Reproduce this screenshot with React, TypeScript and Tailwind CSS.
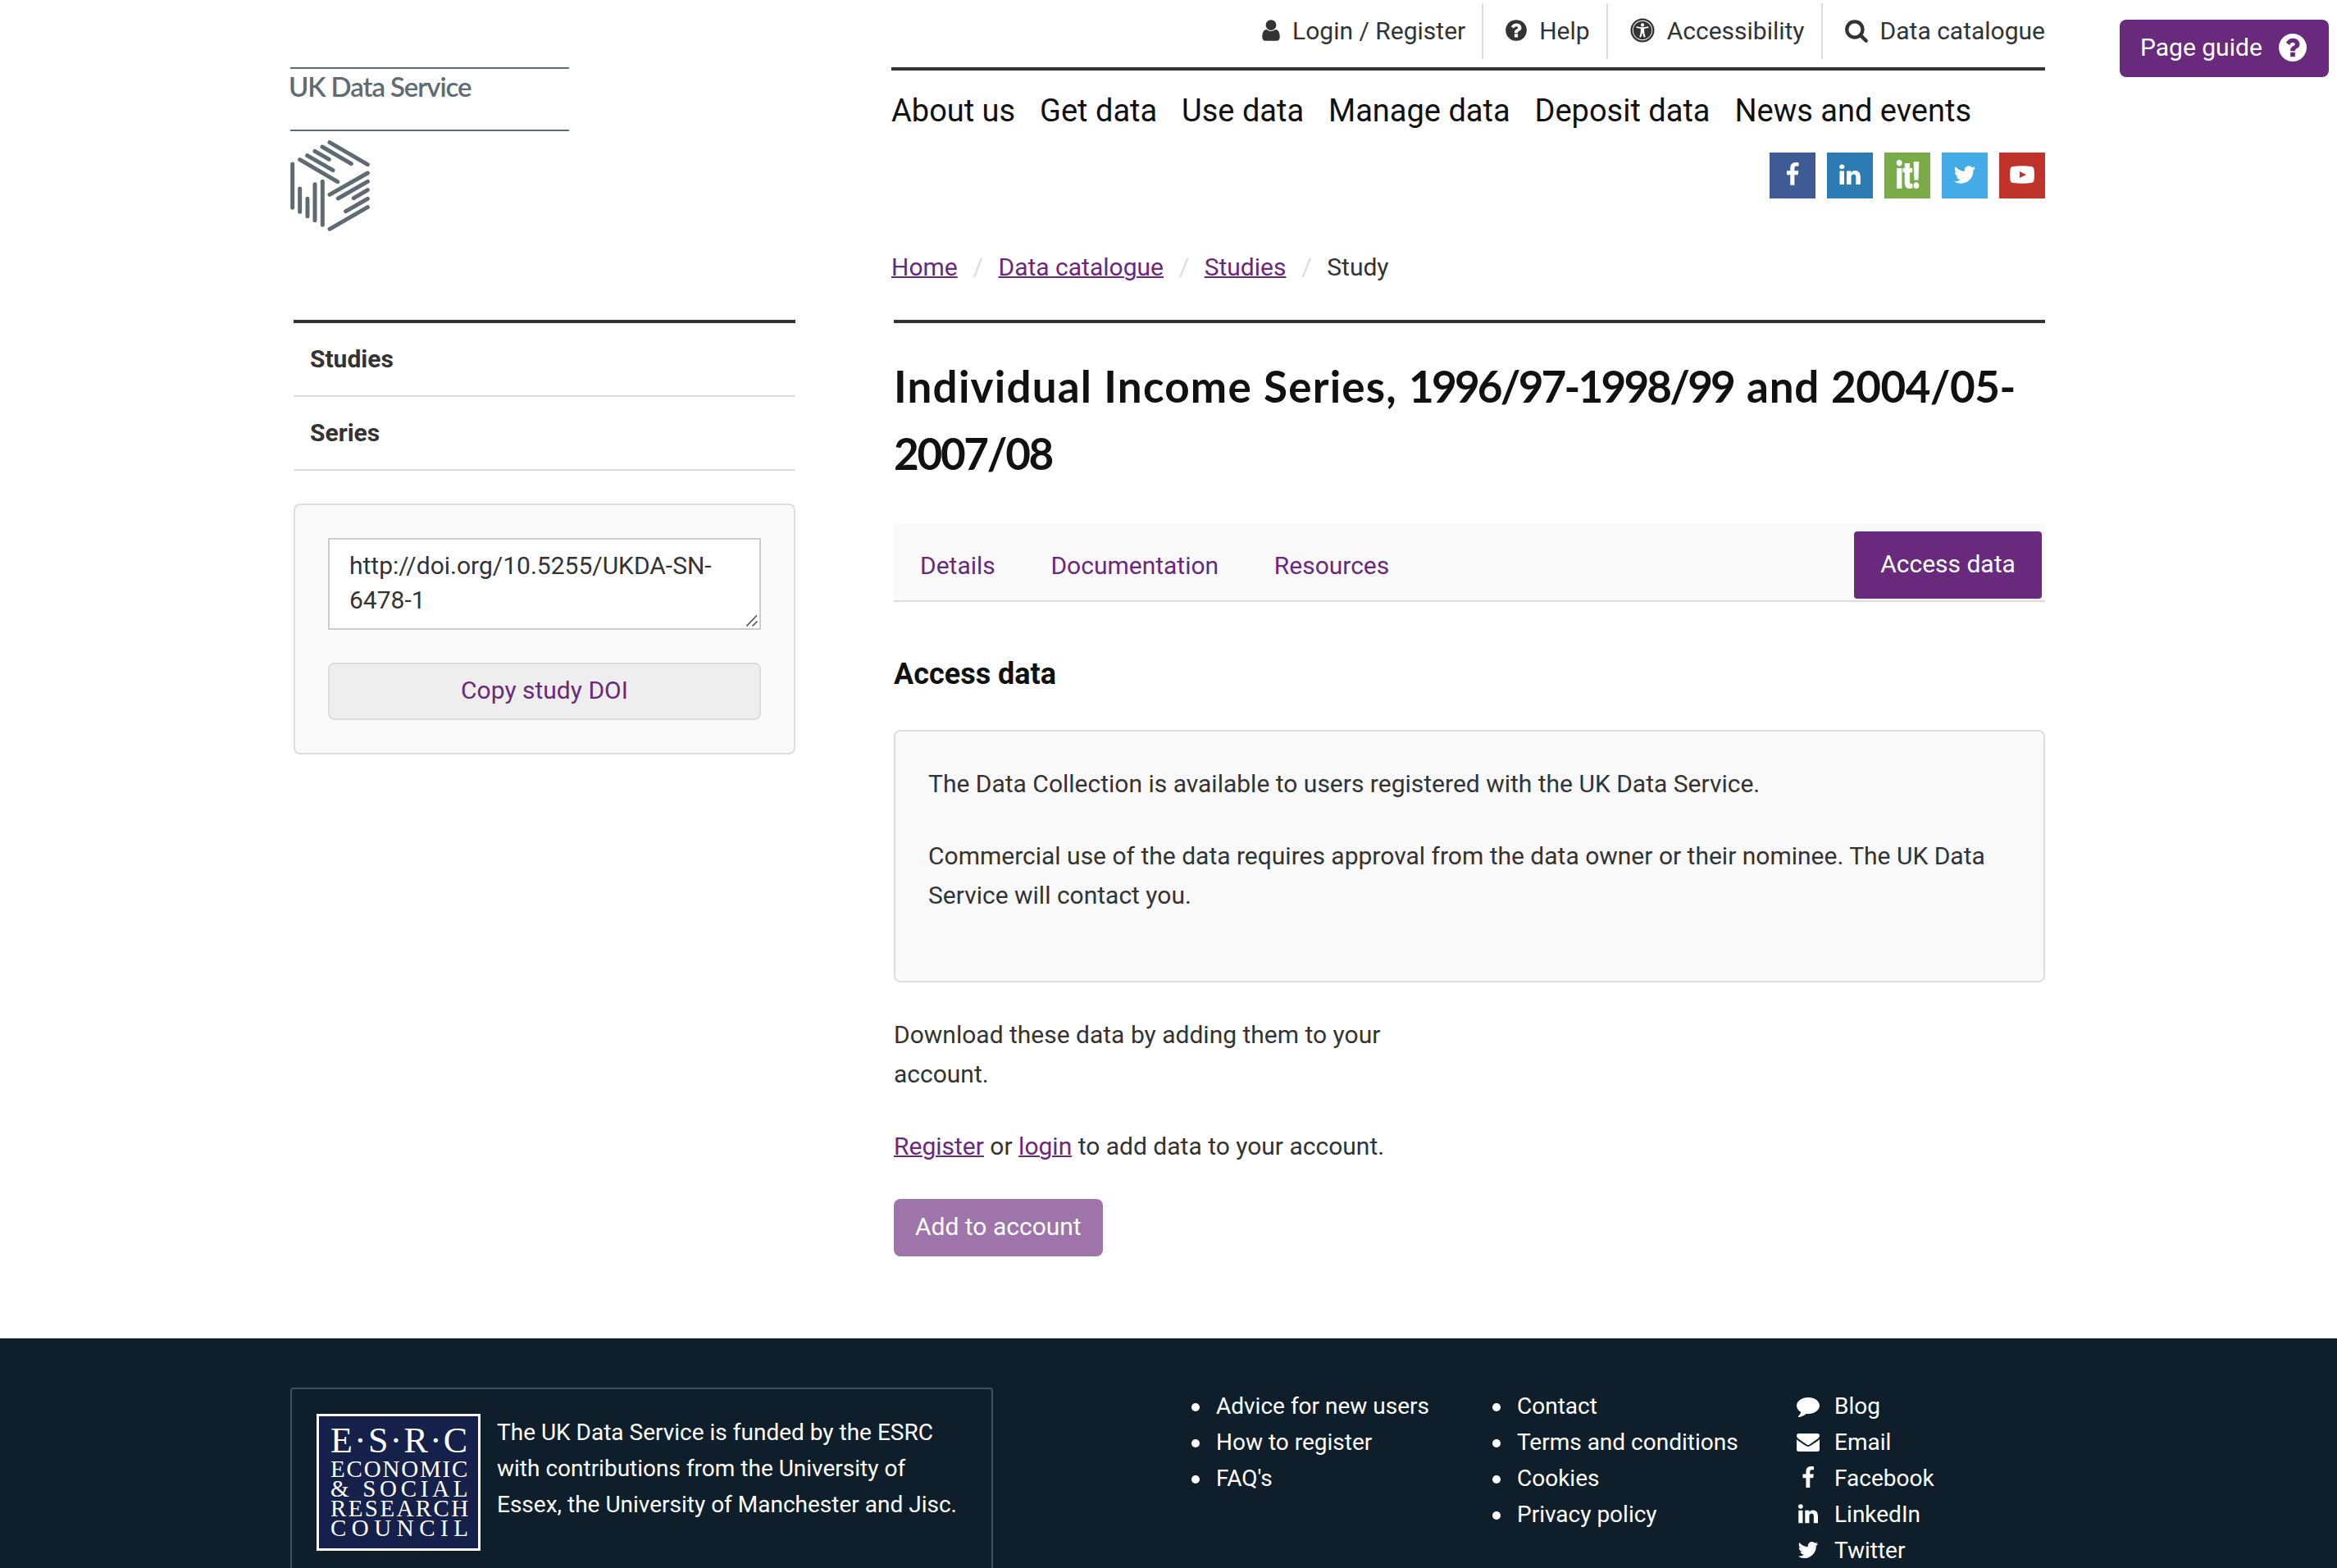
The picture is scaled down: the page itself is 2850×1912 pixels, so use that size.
import type { ReactNode } from "react";
import { FaUniversalAccess } from "react-icons/fa";

const GLYPHS = {
  user: "M1536 1399q0 109-62.5 187t-150.5 78h-854q-88 0-150.5-78t-62.5-187q0-85 8.5-160.5t31.5-152 58.5-131 94-89 134.5-34.5q131 128 313 128t313-128q76 0 134.5 34.5t94 89 58.5 131 31.5 152 8.5 160.5zm-256-887q0 159-112.5 271.5t-271.5 112.5-271.5-112.5-112.5-271.5 112.5-271.5 271.5-112.5 271.5 112.5 112.5 271.5z",
  help: "M1024 1376v-192q0-14-9-23t-23-9h-192q-14 0-23 9t-9 23v192q0 14 9 23t23 9h192q14 0 23-9t9-23zm256-672q0-88-55.5-163t-138.5-116-170-41q-243 0-371 213-15 24 8 42l132 100q7 6 19 6 16 0 25-12 53-68 86-92 34-24 86-24 48 0 85.5 26t37.5 59q0 38-20 61t-68 45q-63 28-115.5 86.5t-52.5 125.5v36q0 14 9 23t23 9h192q14 0 23-9t9-23q0-19 21.5-49.5t54.5-49.5q32-18 49-28.5t46-35 44.5-48 28-60.5 12.5-81zm384 192q0 209-103 385.5t-279.5 279.5-385.5 103-385.5-103-279.5-279.5-103-385.5 103-385.5 279.5-279.5 385.5-103 385.5 103 279.5 279.5 103 385.5z",
  search: "M1216 832q0-185-131.5-316.5t-316.5-131.5-316.5 131.5-131.5 316.5 131.5 316.5 316.5 131.5 316.5-131.5 131.5-316.5zm512 832q0 52-38 90t-90 38q-54 0-90-38l-343-342q-179 124-399 124-143 0-273.5-55.5t-225-150-150-225-55.5-273.5 55.5-273.5 150-225 225-150 273.5-55.5 273.5 55.5 225 150 150 225 55.5 273.5q0 220-124 399l343 343q37 37 37 90z",
  facebook: "M1343 12v264h-157q-86 0-116 36t-30 108v189h293l-39 296h-254v759h-306v-759h-255v-296h255v-218q0-186 104-288.5t277-102.5q147 0 228 12z",
  linkedin: "M477 625v991h-330v-991h330zm21-306q1 73-50.5 122t-135.5 49h-2q-82 0-132-49t-50-122q0-74 51.5-122.5t134.5-48.5 133 48.5 51 122.5zm1166 729v568h-329v-530q0-105-40.5-164.5t-126.5-59.5q-63 0-105.5 34.5t-63.5 85.5q-11 30-11 81v553h-329q2-399 2-647t-1-296l-1-48h329v144h-2q20-32 41-56t56.5-52 87-43.5 114.5-15.5q171 0 275 113.5t104 332.5z",
  twitter: "M1684 408q-67 98-162 167 1 14 1 42 0 130-38 259.5t-115.5 248.5-184.5 210.5-258 146-323 54.5q-271 0-496-145 35 4 78 4 225 0 401-138-105-2-188-64.5t-114-159.5q33 5 61 5 43 0 85-11-112-23-185.5-111.5t-73.5-205.5v-4q68 38 146 41-66-44-105-115t-39-154q0-88 44-163 121 149 294.5 238.5t371.5 99.5q-8-38-8-74 0-134 94.5-228.5t228.5-94.5q140 0 236 102 109-21 205-78-37 115-142 178 93-10 186-50z",
  comment: "M1792 896q0 174-120 321.5t-326 233-450 85.5q-70 0-145-8-198 175-460 242-49 14-114 22-17 2-30.5-9t-17.5-29v-1q-3-4-.5-12t2-10 4.5-9.5l6-9 7-8.5 8-9q7-8 31-34.5t34.5-38 31-39.5 32.5-51 27-59 26-76q-157-89-247.5-220t-90.5-281q0-130 71-248.5t191-204.5 286-136.5 348-50.5q244 0 450 85.5t326 233 120 321.5z",
  envelope: "M1792 710v794q0 66-47 113t-113 47h-1472q-66 0-113-47t-47-113v-794q44 49 101 87 362 246 497 345 57 42 92.5 65.5t94.5 48 110 24.5h2q51 0 110-24.5t94.5-48 92.5-65.5q170-123 498-345 57-39 100-87zm0-294q0 79-49 151t-122 123q-376 261-468 325-10 7-42.5 31t-54 38.5-52 32.5-57.5 27-50 9h-2q-23 0-50-9t-57.5-27-52-32.5-54-38.5-42.5-31q-91-64-262-182.5t-205-142.5q-62-42-117-115.5t-55-136.5q0-78 41.5-130t118.5-52h1472q65 0 112.5 47t47.5 113z",
};

function Glyph({ name, box = "0 0 1792 1792", className }: { name: keyof typeof GLYPHS; box?: string; className: string }) {
  return (
    <svg viewBox={box} fill="currentColor" className={`shrink-0 ${className}`}>
      <path d={GLYPHS[name]} />
    </svg>
  );
}

const CUBE_LINES = [
  [50, 420, 50, 580], [77, 510, 77, 595], [105, 547, 105, 611], [132, 494, 132, 626], [160, 484, 160, 643],
  [186, 341, 325, 422], [159, 357, 265, 419], [132, 373, 184, 403], [104, 389, 198, 443], [77, 404, 215, 485],
  [186, 532, 325, 453], [217, 546, 325, 484], [274, 545, 325, 515], [245, 593, 325, 547], [186, 658, 325, 578],
];

function Logo() {
  return (
    <div className="w-[340px] text-[#5f6b73]">
      <div className="h-[78px] border-y-2 border-[#5f6b73]">
        <div className="-ml-[2px] font-[Lato,sans-serif] text-[33px] leading-[42px] font-semibold tracking-[-1.1px] whitespace-nowrap">UK Data Service</div>
      </div>
      <svg viewBox="42 333 291 333" className="mt-[11px] h-[111px] w-[97px]" stroke="currentColor" strokeWidth="15" strokeLinecap="round">
        {CUBE_LINES.map(([x1, y1, x2, y2], i) => (
          <line key={i} x1={x1} y1={y1} x2={x2} y2={y2} />
        ))}
      </svg>
    </div>
  );
}

function TopLink({ icon, label, last }: { icon: ReactNode; label: string; last?: boolean }) {
  return (
    <li className={`flex items-center gap-[15px] pl-[27px] ${last ? "" : "border-r-2 border-[#ddd] pr-5"}`}>
      {icon}
      <span className="mb-[2px]">{label}</span>
    </li>
  );
}

function SocialLinks() {
  return (
    <div className="flex justify-end gap-[14px] text-white">
      <span className="flex size-14 justify-center bg-[#3f5b95] pt-3"><Glyph name="facebook" className="size-[30px]" /></span>
      <span className="flex size-14 justify-center bg-[#2c7bb3] pt-3"><Glyph name="linkedin" className="size-[30px]" /></span>
      <span className="flex size-14 items-center justify-center overflow-hidden bg-[#7baa49]">
        <span className="inline-block scale-x-[0.78] text-[46px] leading-[56px] font-black tracking-[-1px]">it!</span>
      </span>
      <span className="flex size-14 justify-center bg-[#45abe6] pt-3"><Glyph name="twitter" className="size-[30px]" /></span>
      <span className="flex size-14 justify-center bg-[#bf332b] pt-4">
        <svg viewBox="0 0 30 22" className="h-[22px] w-[30px]">
          <path fill="#fff" d="M4 .9Q15-.3 26 .9Q29 1.200 29.500 4.500Q30.300 11 29.500 17.500Q29 20.800 26 21.100Q15 22.300 4 21.100Q1 20.800 .5 17.500Q-.3 11 .5 4.500Q1 1.200 4 .9Z" />
          <path fill="#bf332b" d="M12 7L20 11L12 15Z" />
        </svg>
      </span>
    </div>
  );
}

function Header() {
  return (
    <header className="flex justify-between">
      <div className="pt-[82px]"><Logo /></div>
      <div className="w-[1407px]">
        <ul className="mt-1 flex h-[68px] justify-end">
          <TopLink label="Login / Register" icon={<Glyph name="user" box="256 0 1280 1792" className="mb-[2px] h-[30px] w-[22px]" />} />
          <TopLink label="Help" icon={<Glyph name="help" box="128 0 1536 1792" className="mb-[2px] h-[30px] w-[26px]" />} />
          <TopLink label="Accessibility" icon={<FaUniversalAccess className="mb-[2px] size-[30px]" />} />
          <TopLink label="Data catalogue" last icon={<Glyph name="search" box="64 0 1664 1792" className="mb-[2px] h-[30px] w-[28px]" />} />
        </ul>
        <nav className="mt-[10px] flex h-[104px] gap-[29.9px] border-t-4 border-[#333] pt-[25px] text-[38px] leading-[48px] text-[#111]">
          {["About us", "Get data", "Use data", "Manage data", "Deposit data", "News and events"].map((t) => (
            <a key={t} className="whitespace-nowrap">{t}</a>
          ))}
        </nav>
        <SocialLinks />
        <div className="mt-[60px] flex gap-[18.7px] leading-[48px]">
          {["Home", "Data catalogue", "Studies"].map((t) => (
            <span key={t} className="flex gap-[18.7px]">
              <a className="text-[#692a7d] underline decoration-2">{t}</a>
              <span className="text-[#ddd]">/</span>
            </span>
          ))}
          <span>Study</span>
        </div>
      </div>
    </header>
  );
}

function Sidebar() {
  return (
    <aside className="ml-1 w-[612px]">
      <ul className="border-t-4 border-[#333] font-bold">
        {["Studies", "Series"].map((t) => (
          <li key={t} className="flex h-[90px] items-center border-b-2 border-[#ddd] pb-[2px] pl-5">{t}</li>
        ))}
      </ul>
      <div className="mt-10 h-[306px] rounded-lg border-2 border-[#ddd] bg-[#f9f9f9] p-10">
        <div className="relative h-[112px] border-2 border-[#ccc] bg-white pt-[11px] pl-6 leading-[42px]">
          <div>http://doi.org/10.5255/UKDA-SN-</div>
          <div>6478-1</div>
          <svg viewBox="0 0 14 14" className="absolute right-[2px] bottom-[2px] size-[14px]" stroke="#555" strokeWidth="1.6">
            <path d="M0.500 13.500L13 0.500M7.500 13.500L13.500 7.500" />
          </svg>
        </div>
        <button className="mt-10 block h-[70px] w-full rounded-lg border-2 border-[#ddd] bg-[#eee] pb-1 text-[#692a7d]">Copy study DOI</button>
      </div>
    </aside>
  );
}

function Study() {
  return (
    <main className="w-[1404px] border-t-4 border-[#333]">
      <h1 className="mt-9 font-[Lato,sans-serif] text-[53px] leading-[82px] font-bold whitespace-nowrap text-[#111]">
        <span className="tracking-[1.2px]">Individual Income Series, </span>
        <span className="mr-[3px] tracking-[-2.8px]">1996/97-1998/99</span> <span className="tracking-[0.8px]">and </span>
        <span className="tracking-[-0.5px]">2004/05-</span>
        <br />
        <span className="tracking-[-2.3px]">2007/08</span>
      </h1>
      <div className="mt-[44px] flex h-[96px] justify-between border-b-2 border-[#ddd] bg-[#f9f9f9] pr-1 pl-8 text-[#692a7d]">
        <div className="flex gap-[67.6px] pt-7 leading-[48px]">
          <a>Details</a>
          <a>Documentation</a>
          <a>Resources</a>
        </div>
        <a className="mt-[10px] h-[82px] w-[229px] rounded bg-[#692a7d] text-center leading-[80px] text-white">Access data</a>
      </div>
      <h3 className="mt-[60px] text-[36px] leading-[56px] font-bold text-[#111]">Access data</h3>
      <div className="mt-10 h-[308px] rounded-lg border-2 border-[#ddd] bg-[#f9f9f9] px-10 pt-10 leading-[48px]">
        <p>The Data Collection is available to users registered with the UK Data Service.</p>
        <p className="mt-10">Commercial use of the data requires approval from the data owner or their nominee. The UK Data Service will contact you.</p>
      </div>
      <div className="mt-10 w-[640px] leading-[48px]">
        <p>Download these data by adding them to your account.</p>
        <p className="mt-10">
          <a className="text-[#692a7d] underline decoration-2">Register</a> or <a className="text-[#692a7d] underline decoration-2">login</a> to add data to your account.
        </p>
      </div>
      <button className="mt-10 block h-[70px] rounded-lg bg-[#9f74ab] px-[26px] pb-1 text-white">Add to account</button>
    </main>
  );
}

function EsrcLogo() {
  return (
    <div className="h-[167px] w-[200px] shrink-0 border-[3px] border-white bg-[#15214a] pt-2 pl-[14px] font-['Liberation_Serif',serif] text-[29px] leading-[24px] whitespace-nowrap text-white">
      <div className="text-[44px] leading-[44px] tracking-[2.2px]">E·S·R·C</div>
      <div className="tracking-[1.800px]">ECONOMIC</div>
      <div className="tracking-[4.700px]">&amp; SOCIAL</div>
      <div className="tracking-[2.4px]">RESEARCH</div>
      <div className="tracking-[6.500px]">COUNCIL</div>
    </div>
  );
}

function LinkList({ items }: { items: string[] }) {
  return (
    <ul>
      {items.map((t) => (
        <li key={t} className="flex h-[44px] items-center gap-5">
          <span className="mt-1 size-[10px] rounded-full bg-white" />
          <span className="mt-[2px]">{t}</span>
        </li>
      ))}
    </ul>
  );
}

function Footer() {
  const social: [keyof typeof GLYPHS, string][] = [
    ["comment", "Blog"],
    ["envelope", "Email"],
    ["facebook", "Facebook"],
    ["linkedin", "LinkedIn"],
    ["twitter", "Twitter"],
  ];
  return (
    <footer className="h-[280px] shrink-0 overflow-hidden bg-[#0e1f2b] pt-[60px] text-[28px] leading-[44px] text-white">
      <div className="ml-[354px] flex w-[2140px]">
        <div className="flex h-[300px] w-[857px] gap-5 rounded border-2 border-[#434f58] p-[30px]">
          <EsrcLogo />
          <p className="mt-px">
            The UK Data Service is funded by the ESRC
            <br />
            with contributions from the University of
            <br />
            Essex, the University of Manchester and Jisc.
          </p>
        </div>
        <div className="ml-[242px] w-[367px]"><LinkList items={["Advice for new users", "How to register", "FAQ's"]} /></div>
        <div className="w-[371px]"><LinkList items={["Contact", "Terms and conditions", "Cookies", "Privacy policy"]} /></div>
        <ul>
          {social.map(([g, t]) => (
            <li key={t} className="flex h-[44px] items-center gap-[18px]">
              <Glyph name={g} className="size-7" />
              <span className="mt-[2px]">{t}</span>
            </li>
          ))}
        </ul>
      </div>
    </footer>
  );
}

export default function App() {
  return (
    <div className="relative flex h-[1912px] w-[2850px] flex-col overflow-hidden bg-white font-[Roboto,sans-serif] text-[30px] text-[#333]">
      <div className="ml-[354px] h-[1632px] w-[2140px] shrink-0">
        <div className="h-[390px]"><Header /></div>
        <div className="flex items-start justify-between">
          <Sidebar />
          <Study />
        </div>
      </div>
      <Footer />
      <a className="absolute top-6 right-[10px] flex h-[70px] w-[255px] items-center justify-between rounded-lg bg-[#692a7d] pr-[27px] pl-[25px] text-white">
        <span className="mb-1">Page guide</span>
        <Glyph name="help" box="128 128 1536 1536" className="mb-[2px] size-[34px]" />
      </a>
    </div>
  );
}
